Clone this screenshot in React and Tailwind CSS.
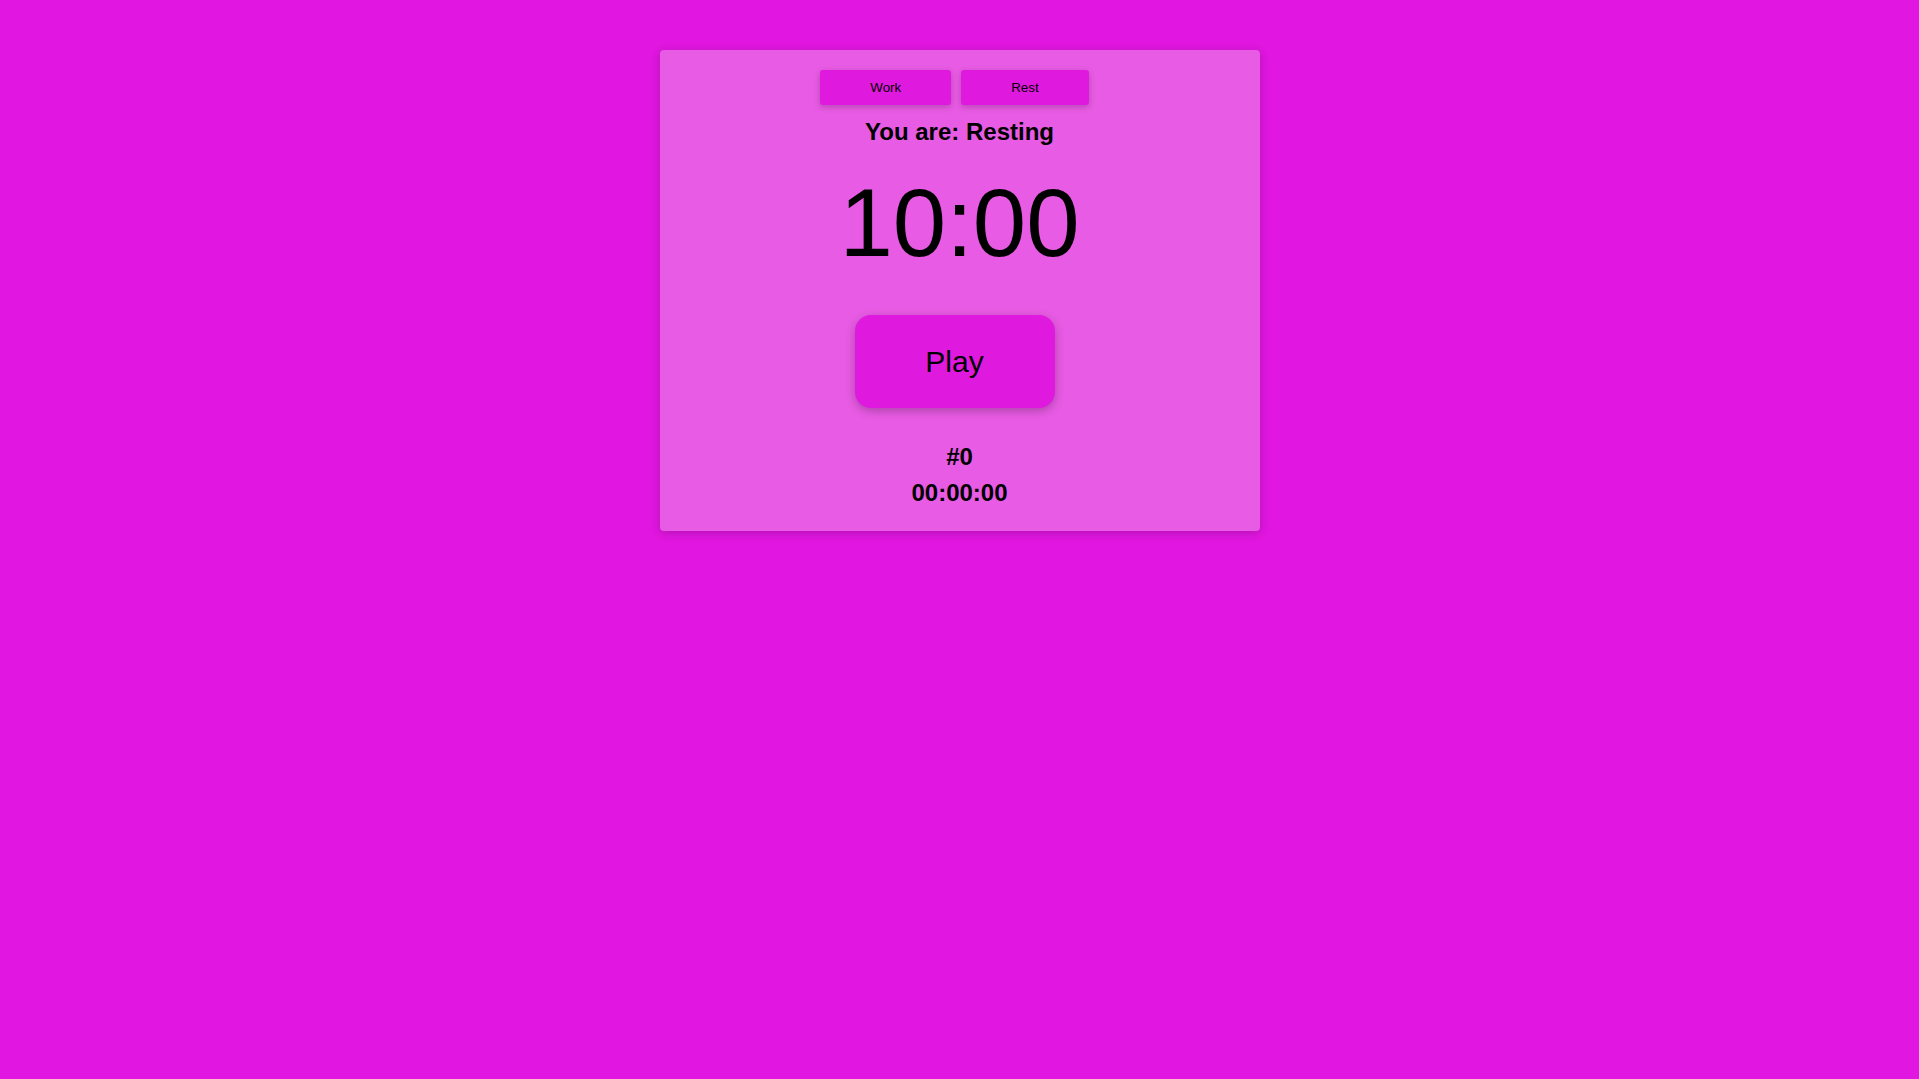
import React, { useState } from 'react';

export default function App() {
  const [mode, setMode] = useState('Resting');

  return (
    <div className="min-h-screen w-full bg-[#e116e0] font-['Liberation_Sans',Arial,sans-serif] text-black pt-[50px]">
      {/* Timer card */}
      <div className="mx-auto w-[600px] bg-[#e85be4] rounded-[4px] shadow-[0_2px_10px_rgba(0,0,0,0.2)] pt-[20px] pb-[24px] flex flex-col items-center">
        <div className="flex">
          <button
            onClick={() => setMode('Working')}
            className="mr-[10px] h-[35px] px-[50px] text-[13.33px] bg-[#e019df] rounded-[3px] shadow-[0_2px_6px_rgba(0,0,0,0.22)]"
          >
            Work
          </button>
          <button
            onClick={() => setMode('Resting')}
            className="mr-[10px] h-[35px] px-[50px] text-[13.33px] bg-[#e019df] rounded-[3px] shadow-[0_2px_6px_rgba(0,0,0,0.22)]"
          >
            Rest
          </button>
        </div>

        <h2 className="mt-[13px] text-[24px] leading-[28px] font-bold">You are: {mode}</h2>

        <div className="mt-[22px] text-[96px] leading-[110px]">10:00</div>

        <button className="mt-[37px] mr-[10px] w-[200px] h-[93px] text-[30px] bg-[#e019df] rounded-[16px] shadow-[0_3px_10px_rgba(0,0,0,0.25)]">
          Play
        </button>

        <div className="mt-[35px] text-[24px] leading-[28px] font-bold">#0</div>
        <div className="mt-[8px] text-[24px] leading-[28px] font-bold">00:00:00</div>
      </div>
    </div>
  );
}
